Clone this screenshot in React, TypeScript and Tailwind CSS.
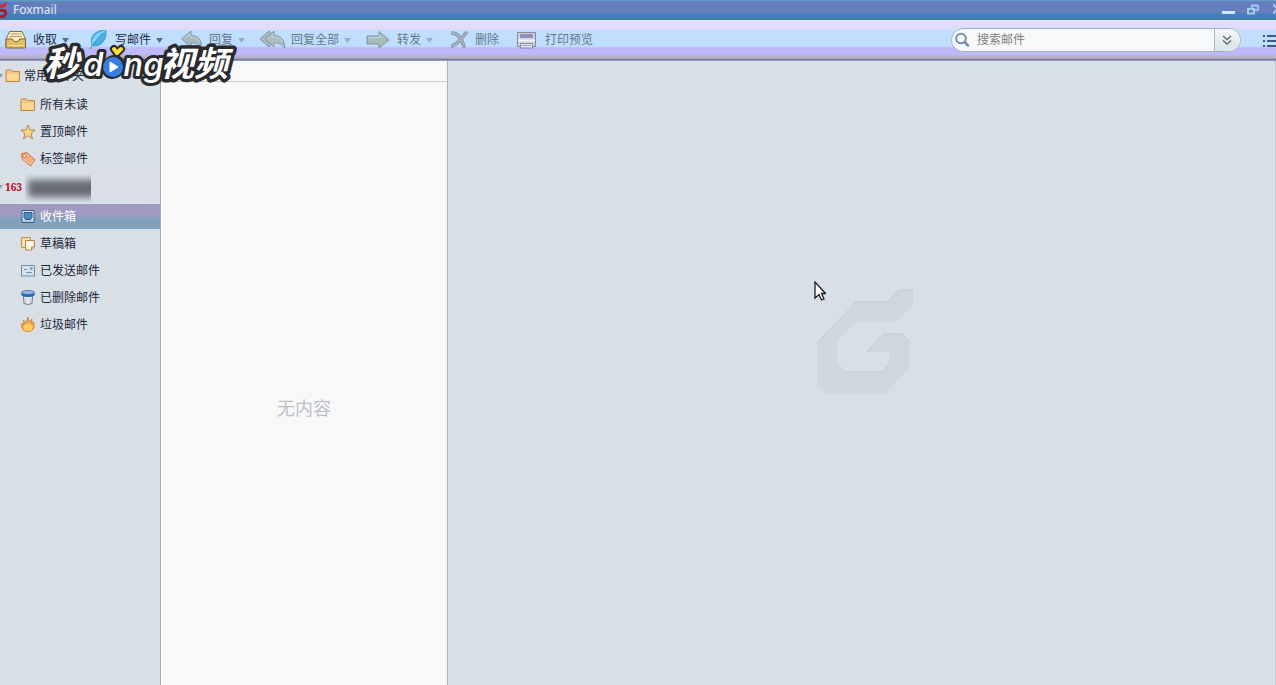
import type { ReactNode } from "react";

const FONT = `font-['Noto_Sans','Noto_Sans_CJK_SC',sans-serif]`;

function FoxLogo() {
  return (
    <svg className="h-4 w-2 shrink-0" viewBox="0 0 8 16">
      <path d="M0 3 3 2 7 0 6 4 3 6H0Z" fill="#c9303c" />
      <path d="M0 7H5L7 9V13L4 16H0V13H3L4 12V10H0Z" fill="#a51c2b" />
    </svg>
  );
}

function InboxTray() {
  return (
    <svg className="h-5 w-[22px]" viewBox="0 0 22 20">
      <path d="M4.5 1.500H17L20.500 9V17.500H1V9Z" fill="#f8edc9" stroke="#85713f" />
      <path d="M5.500 4H16M4.500 6.500H17" stroke="#b69a5c" />
      <path d="M1 9H7.500C8 12.500 14 12.500 14.500 9H20.500V17Q20.500 18 19.500 18H2Q1 18 1 17Z" fill="#e3bd66" stroke="#7b6434" />
      <path d="M2.500 15.500H19" stroke="#f6dc9a" />
    </svg>
  );
}

function Feather() {
  return (
    <svg className="h-5 w-[22px]" viewBox="0 0 22 20">
      <path d="M5 15C2 6 9 0 19 0C20 8 16 16 7 16Z" fill="#45b1e8" stroke="#3685bd" strokeWidth=".7" />
      <path d="M5 15C4 7 10 2 19 0L10 10Z" fill="#83d2f7" />
      <path d="M3 19C7 13 11 8 16 3" fill="none" stroke="#2b75ab" strokeWidth=".8" />
    </svg>
  );
}

function Reply() {
  return (
    <svg className="h-5 w-[22px]" viewBox="0 0 22 20">
      <path d="M.5 9 10 1V5.500C17 5.500 21 10 20.500 18C18 14 15 13 10 13V17Z" fill="#a9bbc2" stroke="#8597a2" />
      <path d="M3 9 9 4V7C14 7 17 9 18.500 12" fill="none" stroke="#c6d4d5" />
    </svg>
  );
}

function ReplyAll() {
  return (
    <svg className="h-5 w-[22px] overflow-visible" viewBox="0 0 22 20">
      <path d="M-3 9 6 1 8 3.500 3 9 8 14.500 6 17Z" fill="#a9bbc2" stroke="#8597a2" />
      <path d="M2 9 11 1V5.500C18 5.500 22 10 21.500 18C19 14 16 13 11 13V17Z" fill="#adbdc1" stroke="#8597a2" />
      <path d="M5 9 10 4V7C15 7 18 9 19.500 12" fill="none" stroke="#c6d4d5" />
    </svg>
  );
}

function Forward() {
  return (
    <svg className="h-5 w-[22px] overflow-visible" viewBox="0 0 22 20">
      <path d="M-2 6H10V1.500L20 10 10 18V14H-2Z" fill="#a8bcb9" stroke="#7b929a" />
      <path d="M-1 7.500H11V4" fill="none" stroke="#c8d7d3" />
    </svg>
  );
}

function Cross() {
  return (
    <svg className="h-5 w-[18px]" viewBox="0 0 18 20">
      <path d="M1 3C7 3 10 8 13 16M15 3C12 6 8 14 1 16" fill="none" stroke="#7b8d9f" strokeWidth="3.500" strokeLinecap="round" />
      <path d="M1 3C7 3 10 8 13 16M15 3C12 6 8 14 1 16" fill="none" stroke="#a5b5c4" strokeWidth="2" strokeLinecap="round" />
    </svg>
  );
}

function Printer() {
  return (
    <svg className="h-5 w-[22px]" viewBox="0 0 22 20">
      <path d="M.5 2.500H18.500V16.500H.5Z" fill="#ccd3df" stroke="#8288a0" />
      <path d="M3 4H16V8H3Z" fill="#9490b7" />
      <path d="M1 10.500H18" stroke="#f0f3f8" strokeWidth="2" />
      <path d="M3.500 13.500H15.500V18H3.500Z" fill="#e6eaf0" stroke="#8288a0" />
      <path d="M5 15.500H14" stroke="#9ca6b3" />
    </svg>
  );
}

function Folder() {
  return (
    <svg className="h-4 w-4" viewBox="0 0 16 16">
      <path d="M1 13.500V2.500Q1 2 1.500 2H6.500L8 3.500H14Q14.500 3.500 14.500 4V13.500Z" fill="#f5c778" stroke="#bb874b" />
      <path d="M2 6H13.500V12.500H2Z" fill="#fbd995" />
    </svg>
  );
}

function Star() {
  return (
    <svg className="h-4 w-4" viewBox="0 0 16 16">
      <path d="M8 1 10 6H15L11 9.500 12.500 15 8 11.500 3.500 15 5 9.500 1 6H6Z" fill="#fbd982" stroke="#b48849" />
    </svg>
  );
}

function Tag() {
  return (
    <svg className="h-4 w-4" viewBox="0 0 16 16">
      <path d="M1.500 2.500 7 1.500 15 9 10.500 15 2 8Z" fill="#f7ae7b" stroke="#c57d55" />
      <path d="M3 8 10.500 13.500 13.500 9.500" fill="none" stroke="#fdcca5" />
      <circle cx="4.500" cy="4.800" r="1.600" fill="#fff" stroke="#d95b4f" />
    </svg>
  );
}

function Inbox() {
  return (
    <svg className="h-4 w-4" viewBox="0 0 16 16">
      <path d="M2 1.500H14V13.500H2Z" fill="#dcebf4" stroke="#355c8c" />
      <path d="M4 3.500H12V8.500L10.500 10.500H5.500L4 8.500Z" fill="#4b8abd" stroke="#2a5d92" />
      <path d="M3 12H13" stroke="#83a7c6" />
    </svg>
  );
}

function Drafts() {
  return (
    <svg className="h-4 w-4" viewBox="0 0 16 16">
      <path d="M1.500 1.500H10.500V11.500H1.500Z" fill="#f8dfb4" stroke="#c98d45" />
      <path d="M5.500 4.500H14.500V11L11.500 14H5.500Z" fill="#fff4df" stroke="#b9834a" />
      <path d="M14 11H11.500V13.500" fill="#edc07d" stroke="#b9834a" />
    </svg>
  );
}

function Sent() {
  return (
    <svg className="h-4 w-4" viewBox="0 0 16 16">
      <path d="M1.500 2.500H14.500V13H1.500Z" fill="#d5e3ef" stroke="#7484a4" />
      <path d="M10 4.500H12.500V6.500H10Z" fill="#5e91bf" />
      <path d="M4 6.500H7M6 9.500H12" stroke="#7397a9" />
    </svg>
  );
}

function Trash() {
  return (
    <svg className="h-4 w-4" viewBox="0 0 16 16">
      <path d="M3.500 6 4 13.500Q8 15.500 12 13.500L12.500 6Z" fill="#e8ecf2" stroke="#697a98" />
      <path d="M6 8V13M10 8V13" stroke="#b4bfcd" />
      <path d="M1.500 2.500V5.500Q8 8.500 14.500 5.500V2.500Z" fill="#2863be" />
      <ellipse cx="8" cy="2.500" rx="6.500" ry="1.900" fill="#a1bcd3" stroke="#3773c6" />
    </svg>
  );
}

function Flame() {
  return (
    <svg className="h-4 w-4" viewBox="0 0 16 16">
      <path d="M5 14C2 13 1 10 2 6L4 8 3.500 3 6 6 8 0 9 5 12 2 11.500 6 14 5C14.500 10 14 13 10 14.500Z" fill="#f5a947" stroke="#c17e37" strokeWidth=".8" />
      <ellipse cx="8" cy="10.500" rx="4.500" ry="3.500" fill="#ffcd61" />
    </svg>
  );
}

function Caret({ muted }: { muted?: boolean }) {
  return (
    <svg className="ml-[5px] h-[5px] w-[7px]" viewBox="0 0 7 5">
      <path d="M0 0H7L3.500 5Z" fill={muted ? "#90b5be" : "#596c8d"} />
    </svg>
  );
}

interface Tool {
  label: string;
  icon: ReactNode;
  menu?: boolean;
  muted?: boolean;
}

const tools: Tool[] = [
  { label: "收取", icon: <InboxTray />, menu: true },
  { label: "写邮件", icon: <Feather />, menu: true },
  { label: "回复", icon: <Reply />, menu: true, muted: true },
  { label: "回复全部", icon: <ReplyAll />, menu: true, muted: true },
  { label: "转发", icon: <Forward />, menu: true, muted: true },
  { label: "删除", icon: <Cross />, muted: true },
  { label: "打印预览", icon: <Printer />, muted: true },
];

const quickFolders = [
  { label: "所有未读", icon: <Folder /> },
  { label: "置顶邮件", icon: <Star /> },
  { label: "标签邮件", icon: <Tag /> },
];

const mailFolders = [
  { label: "收件箱", icon: <Inbox />, active: true },
  { label: "草稿箱", icon: <Drafts /> },
  { label: "已发送邮件", icon: <Sent /> },
  { label: "已删除邮件", icon: <Trash /> },
  { label: "垃圾邮件", icon: <Flame /> },
];

function TitleBar() {
  return (
    <header className="flex h-5 shrink-0 items-center bg-[linear-gradient(#62a3c8_0px,#647dbc_2px,#667ebf_12px,#437fbf_14px,#427fbc_17px,#3b7e9d_20px)]">
      <FoxLogo />
      <h1 className="ml-[5px] text-xs leading-4 text-[#e2e9f7]">Foxmail</h1>
      <div className="ml-auto flex items-center">
        <button aria-label="最小化" className="flex h-5 w-[13px] items-center">
          <svg className="h-5 w-[13px]" viewBox="0 0 13 20">
            <path d="M0 12.500H13" stroke="#d3e6ff" strokeWidth="3" />
          </svg>
        </button>
        <button aria-label="还原" className="ml-3 h-5 w-3">
          <svg className="h-5 w-3" viewBox="0 0 12 20" fill="none" strokeWidth="2">
            <path d="M5 5.500H11V10H5Z" stroke="#a0c1fa" />
            <path d="M1 9H7V13.500H1Z" fill="#517fbc" stroke="#a3d0dc" />
          </svg>
        </button>
        <button aria-label="关闭" className="ml-[14px] h-5 w-[3px]">
          <svg className="h-5 w-[3px]" viewBox="0 0 3 20">
            <path d="M0 4 3 8M3 10 0 14" stroke="#a7c4e6" strokeWidth="2" />
          </svg>
        </button>
      </div>
    </header>
  );
}

function SearchBox() {
  return (
    <div className="ml-auto flex h-6 w-[290px] shrink-0 items-center overflow-hidden rounded-full border border-[#9cb3c7] bg-[#f7f8f9]">
      <label htmlFor="search" className="ml-[3px]">
        <svg className="h-4 w-4" viewBox="0 0 16 16" fill="none" stroke="#718fac" strokeWidth="2">
          <circle cx="6" cy="6.500" r="4.800" />
          <path d="M10 10.500 13 13.500" strokeWidth="2.500" strokeLinecap="round" />
        </svg>
      </label>
      <input
        id="search"
        aria-label="搜索邮件"
        placeholder="搜索邮件"
        className="ml-[6px] min-w-0 flex-1 bg-transparent text-xs text-[#777] outline-none placeholder:text-[#808080]"
      />
      <button aria-label="搜索选项" className="flex h-full w-[26px] items-center justify-center border-l border-[#a8b9c2] bg-linear-to-b from-[#f4f7f8] to-[#d8e5e7]">
        <svg className="h-3 w-3" viewBox="0 0 12 12" fill="none" stroke="#646b72" strokeWidth="1.500">
          <path d="M1 2 5 5.500 9 2M1 6.500 5 10 9 6.500" />
        </svg>
      </button>
    </div>
  );
}

function Toolbar() {
  return (
    <div className="flex h-[41px] shrink-0 items-center bg-[linear-gradient(#e6edf5_0px,#e0dcfa_2px,#e0dcfa_8px,#c0dfff_11px,#c0dfff_26px,#beb9fa_28px,#beb9fa_34px,#b9b5cf_36px,#b9b5cf_38px,#7c81a5_39px,#7c81a5_40px,#a9afc3_41px)] pb-px pl-[5px]">
      <nav className="flex items-center gap-[18px]">
        {tools.map((tool) => (
          <button
            key={tool.label}
            className={`flex shrink-0 items-center whitespace-nowrap text-xs leading-5 ${tool.muted ? "text-[#677685]" : "text-[#242c46]"}`}
          >
            {tool.icon}
            <span className="ml-[6px]">{tool.label}</span>
            {tool.menu && <Caret muted={tool.muted} />}
          </button>
        ))}
      </nav>
      <SearchBox />
      <button aria-label="菜单" className="ml-[22px] h-4 w-[13px] shrink-0">
        <svg className="h-4 w-[13px]" viewBox="0 0 13 16" stroke="#3f5a80" strokeWidth="2">
          <path d="M0 4H2M4 4H13M0 9H2M4 9H13M0 14H2M4 14H13" />
        </svg>
      </button>
    </div>
  );
}

interface FolderRowProps {
  label: string;
  icon: ReactNode;
  active?: boolean;
}

function FolderRow({ label, icon, active }: FolderRowProps) {
  return (
    <li className="flex h-[27px] items-center">
      <button
        className={`flex h-[25px] w-full items-center gap-1 pl-5 text-xs ${active ? "bg-[linear-gradient(#9f98bf_0px,#a19bc1_12px,#829fbe_14px,#819fba_25px)] text-white" : "text-[#22243c]"}`}
      >
        {icon}
        {label}
      </button>
    </li>
  );
}

function Sidebar() {
  return (
    <aside className="w-[161px] shrink-0 border-r border-[#a4abba] bg-[#d8e0e6]">
      <button className="flex h-[30px] w-full items-center text-xs text-[#22243c]">
        <svg className="h-[5px] w-[3px]" viewBox="0 0 3 5">
          <path d="M0 0H3L0 4Z" fill="#8798a8" />
        </svg>
        <span className="ml-[2px]">
          <Folder />
        </span>
        <span className="ml-[3px]">常用文件夹</span>
      </button>
      <ul>
        {quickFolders.map((folder) => (
          <FolderRow key={folder.label} {...folder} />
        ))}
      </ul>
      <div className="flex h-[31px] items-center bg-linear-to-r from-[#d8e0e6] to-[#dcdfe8]">
        <svg className="h-[5px] w-[3px]" viewBox="0 0 3 5">
          <path d="M0 0H3L0 4Z" fill="#8798a8" />
        </svg>
        <span className="ml-[2px] font-['Noto_Serif','DejaVu_Serif',serif] text-[10px] font-bold text-[#bd0018]">163</span>
        {/* account name is hidden */}
        <div className="ml-[3px] h-7 w-[66px] overflow-hidden pl-[3px]">
          <div className="mt-[5px] h-[19px] w-20 bg-linear-to-b from-[#80868e] via-[#5f646c] to-[#858b92] blur-[3px]" />
        </div>
      </div>
      <ul>
        {mailFolders.map((folder) => (
          <FolderRow key={folder.label} {...folder} />
        ))}
      </ul>
    </aside>
  );
}

function EmptyPreview() {
  return (
    <main className="flex flex-1 items-center justify-center border-r border-[#c2c9d1] bg-[#d8dfe6] pb-[62px]">
      <svg className="ml-[6px] h-[106px] w-[98px]" viewBox="0 0 98 106">
        <path
          d="M83 1H97V15L80 33H40L21 52V73L30 83H66L73 76V63H51L67 45H86L94 53V79L69 105H11L1 95V54L40 13H72Z"
          fill="#d0d7de"
        />
        <path d="M1 54 40 13H72L83 1H97M51 63 67 45H86L94 53M30 83H66L73 76" fill="none" stroke="#c3cad1" />
      </svg>
    </main>
  );
}

function VideoBrand() {
  return (
    <svg
      className="pointer-events-none absolute top-6 left-10 h-[76px] w-[204px] font-['Noto_Sans_CJK_SC',sans-serif]"
      viewBox="0 0 204 76"
    >
      <g fill="#fff" stroke="#292b2e" strokeWidth="7" strokeLinejoin="round" paintOrder="stroke" fontStyle="italic">
        <text x="4" y="52" fontSize="35" fontWeight="700">秒</text>
        <text x="120" y="52" fontSize="34" fontWeight="700">视频</text>
        <text x="43" y="52" fontSize="33" fontWeight="500" strokeWidth="6" className="font-['Inter',sans-serif]">dong</text>
      </g>
      <circle cx="73" cy="43" r="11" fill="#292b2e" />
      <circle cx="73" cy="43" r="10" fill="#347ee5" />
      <path d="M70 38 78 43 70 48Z" fill="#fff" stroke="#fff" strokeLinejoin="round" />
      <path d="M74 25 77 29 81 25" fill="none" stroke="#292b2e" strokeWidth="8" strokeLinecap="round" strokeLinejoin="round" />
      <path d="M74 25 77 29 81 25" fill="none" stroke="#ffdf33" strokeWidth="4" strokeLinecap="round" strokeLinejoin="round" />
    </svg>
  );
}

function Pointer() {
  return (
    <svg className="pointer-events-none absolute top-[281px] left-[814px] h-5 w-3" viewBox="0 0 12 20">
      <path d="M1 1V17L5 13.500 7.500 19 10 18 7.500 12.500H11.500Z" fill="#fff" stroke="#171b22" strokeWidth="1.300" />
    </svg>
  );
}

export default function App() {
  return (
    <div className={`relative flex h-screen flex-col overflow-hidden ${FONT}`}>
      <TitleBar />
      <Toolbar />
      <div className="flex min-h-0 flex-1">
        <Sidebar />
        <section className="flex w-[287px] shrink-0 flex-col border-r border-[#a9b2bd] bg-[#f8f8f8]">
          <div className="h-[21px] shrink-0 border-b border-[#c8cacc]" />
          <p className="flex flex-1 items-center justify-center pt-12 text-lg text-[#bbc1c9]">无内容</p>
        </section>
        <EmptyPreview />
      </div>
      <VideoBrand />
      <Pointer />
    </div>
  );
}
